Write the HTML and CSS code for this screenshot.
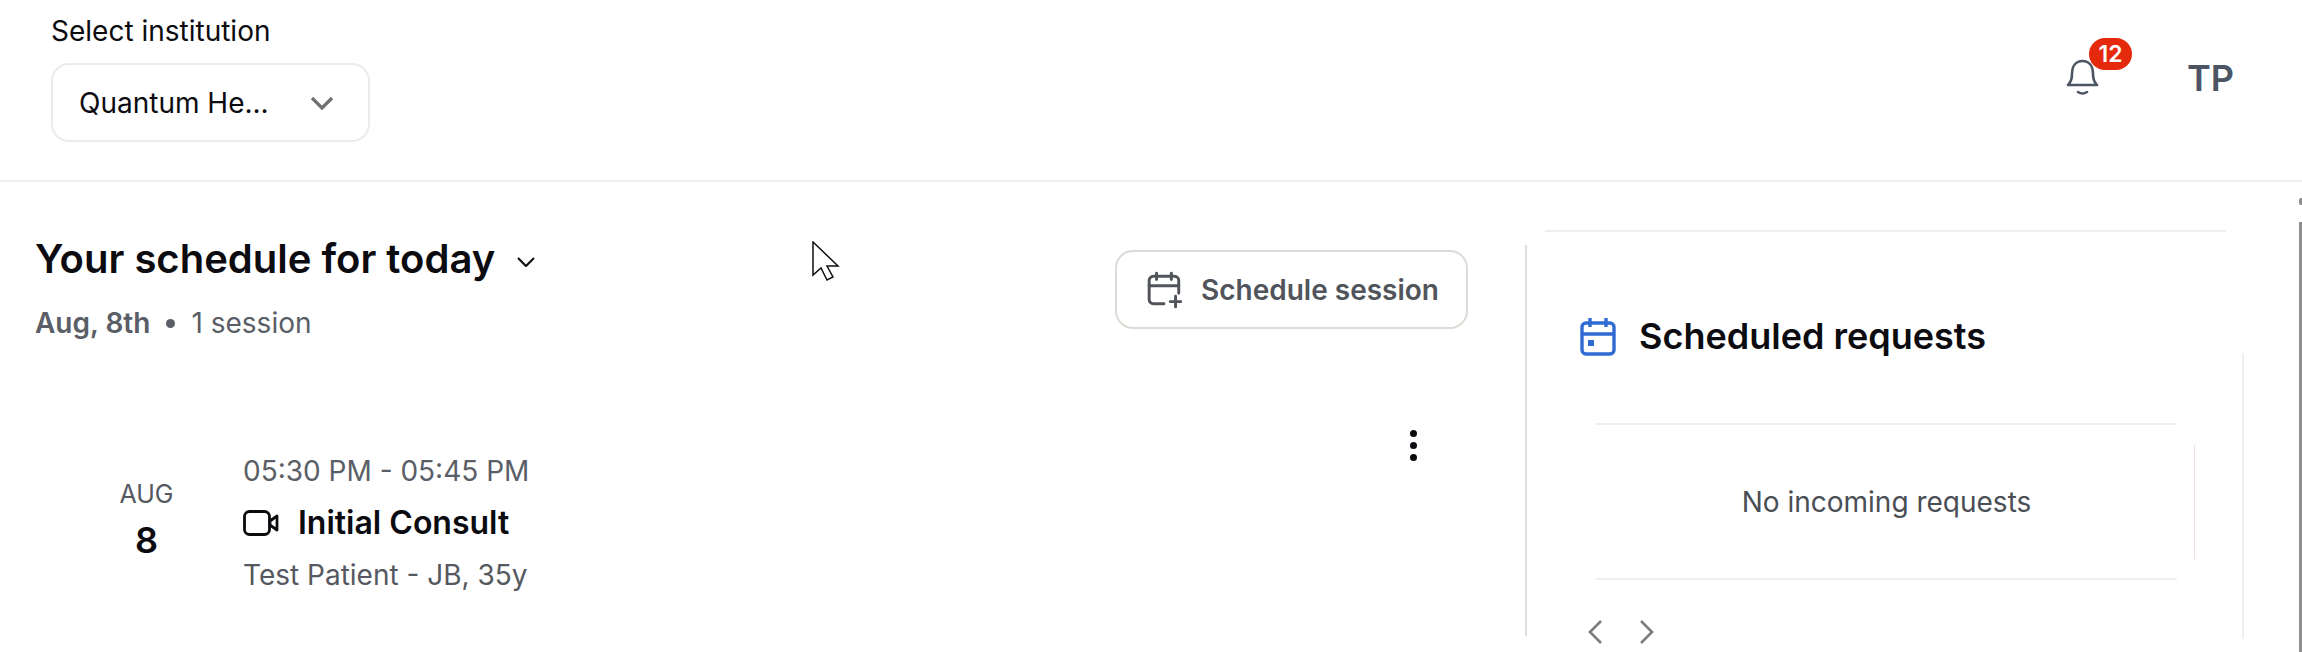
FILE: index.html
```html
<!DOCTYPE html>
<html lang="en">

<head>
  <meta charset="UTF-8">
  <title>Schedule</title>
  <link rel="stylesheet" href="styles.css">
</head>

<body>

  <header class="top-bar">
    <div class="institution">
      <label class="institution-label">Select institution</label>
      <div class="institution-select">
        <span>Quantum He...</span>
        <svg class="select-chevron" viewBox="0 0 24 14" fill="none" stroke="#707070" stroke-width="3.2">
          <path d="M2 2l10 10L22 2" />
        </svg>
      </div>
    </div>
    <div class="top-actions">
      <div class="bell">
        <svg class="bell-icon" viewBox="0 0 34 38" fill="none" stroke="#4b5563" stroke-width="2.6" stroke-linecap="round" stroke-linejoin="round">
          <path d="M2 27c3-3 4-6 4-11C6 8 10 3 16.5 3S27 8 27 16c0 5 1 8 4 11z" />
          <path d="M12 34c3 2 6 2 9 0" />
        </svg>
        <span class="badge">12</span>
      </div>
      <span class="avatar">TP</span>
    </div>
  </header>

  <main class="content">
    <section class="schedule">
      <div class="schedule-head">
        <div>
          <h1 class="schedule-title">
            Your schedule for today
            <svg class="title-chevron" viewBox="0 0 18 10" fill="none" stroke="#111" stroke-width="2.2">
              <path d="M1 1l8 8 8-8" />
            </svg>
          </h1>
          <p class="schedule-sub"><strong>Aug, 8th</strong><span class="dot"></span>1 session</p>
        </div>
        <button class="schedule-btn">
          <svg class="btn-icon" viewBox="0 0 34 36" fill="none" stroke="#51555b" stroke-width="2.8" stroke-linecap="round" stroke-linejoin="round">
            <path d="M16 31H6a4 4 0 0 1-4-4V9a4 4 0 0 1 4-4h20a4 4 0 0 1 4 4v12" />
            <path d="M2 14h28M9 2v6M23 2v6M27 24v10M22 29h10" />
          </svg>
          Schedule session
        </button>
      </div>

      <div class="session">
        <div class="session-date">
          <span class="session-month">AUG</span>
          <span class="session-day">8</span>
        </div>
        <div class="session-info">
          <div class="session-time">05:30 PM - 05:45 PM</div>
          <div class="session-name">
            <svg class="video-icon" viewBox="0 0 36 26" fill="none" stroke="#0b0b0f" stroke-width="2.8" stroke-linejoin="round">
              <rect x="1.5" y="1.5" width="25" height="23" rx="5" />
              <path d="M27 11l7-5v14l-7-5z" />
            </svg>
            Initial Consult
          </div>
          <div class="session-patient">Test Patient - JB, 35y</div>
        </div>
        <div class="session-menu">
          <span></span><span></span><span></span>
        </div>
      </div>
    </section>

    <aside class="requests">
      <h2 class="requests-title">
        <svg class="requests-icon" viewBox="0 0 36 39" fill="none" stroke="#2f6bd3" stroke-width="3.4" stroke-linejoin="round">
          <rect x="2" y="6" width="32" height="31" rx="4" />
          <path d="M2 17h32M10 1v9M26 1v9" />
          <rect x="8" y="23" width="6" height="6" fill="#2f6bd3" stroke="none" />
        </svg>
        Scheduled requests
      </h2>
      <div class="requests-empty">No incoming requests</div>
      <div class="requests-nav">
        <svg viewBox="0 0 14 24" fill="none" stroke="#7c7c7c" stroke-width="2.6"><path d="M13 1L2 12l11 11" /></svg>
        <svg viewBox="0 0 14 24" fill="none" stroke="#7c7c7c" stroke-width="2.6"><path d="M1 1l11 11L1 23" /></svg>
      </div>
    </aside>
  </main>

  <div class="scroll-dot"></div>
  <div class="scroll-thumb"></div>

  <svg class="cursor" viewBox="0 0 28 40" fill="#fff" stroke="#111" stroke-width="1.5" stroke-linejoin="miter">
    <path d="M1 1v33l8-7 6 12 6-3-6-11h11z" />
  </svg>

</body>

</html>
```

FILE: styles.css
```css
html,
body {
  height: 652px;
  overflow: hidden;
}

body {
  margin: 0;
  background: #fff;
  color: #0b0b10;
  font-family: "Inter", "Liberation Sans", sans-serif;
  position: relative;
}

.top-bar {
  height: 182px;
  box-sizing: border-box;
  border-bottom: 2px solid #eeeeee;
  display: flex;
  justify-content: space-between;
  padding: 16px 68px 0 51px;
}

.institution-label {
  display: block;
  font-size: 28px;
  line-height: 30px;
}

.institution-select {
  width: 319px;
  height: 79px;
  margin-top: 17px;
  box-sizing: border-box;
  border: 2px solid #ebebe9;
  border-radius: 18px;
  padding: 0 34px 0 26px;
  display: flex;
  align-items: center;
  justify-content: space-between;
  font-size: 28px;
}

.select-chevron {
  width: 24px;
  height: 14px;
}

.top-actions {
  display: flex;
  align-items: flex-start;
  gap: 87px;
  padding-top: 42px;
}

.bell {
  position: relative;
  width: 34px;
  height: 38px;
}

.bell-icon {
  width: 34px;
  height: 38px;
}

.badge {
  position: absolute;
  top: -20px;
  left: 23px;
  width: 43px;
  height: 32px;
  border-radius: 16px;
  background: #e5290c;
  color: #fff;
  font-size: 23px;
  font-weight: 600;
  line-height: 32px;
  text-align: center;
}

.avatar {
  font-size: 36px;
  font-weight: 600;
  line-height: 36px;
  color: #4b5563;
  margin-top: 2px;
}

.content {
  display: flex;
}

.schedule {
  width: 1525px;
  box-sizing: border-box;
  padding: 0 57px 0 35px;
}

.schedule-head {
  display: flex;
  justify-content: space-between;
  align-items: flex-start;
  padding-top: 53px;
}

.schedule-title {
  margin: 0;
  font-size: 40px;
  font-weight: 600;
  line-height: 48px;
  display: flex;
  align-items: center;
  gap: 22px;
}

.title-chevron {
  width: 18px;
  height: 10px;
  margin-top: 6px;
}

.schedule-sub {
  margin: 23px 0 0;
  font-size: 28px;
  line-height: 34px;
  color: #5a5e66;
  display: flex;
  align-items: center;
}

.schedule-sub strong {
  font-weight: 600;
}

.dot {
  width: 9px;
  height: 9px;
  border-radius: 50%;
  background: #5a5e66;
  margin: 0 16px;
}

.schedule-btn {
  margin-top: 15px;
  width: 353px;
  height: 79px;
  box-sizing: border-box;
  background: #fff;
  border: 2px solid #dedbd6;
  border-radius: 18px;
  padding: 0 0 0 30px;
  display: flex;
  align-items: center;
  gap: 18px;
  font-family: inherit;
  font-size: 28px;
  font-weight: 600;
  color: #51555b;
}

.btn-icon {
  width: 36px;
  height: 38px;
}

.session {
  display: flex;
  align-items: flex-start;
  margin-top: 114px;
  position: relative;
}

.session-date {
  width: 208px;
  box-sizing: border-box;
  padding-top: 27px;
  padding-left: 15px;
  display: flex;
  flex-direction: column;
  align-items: center;
}

.session-month {
  font-size: 25px;
  line-height: 26px;
  color: #55595f;
}

.session-day {
  font-size: 36px;
  font-weight: 600;
  line-height: 44px;
  margin-top: 11px;
}

.session-info {
  flex: 1;
}

.session-time {
  font-size: 28px;
  line-height: 34px;
  color: #5a5e66;
}

.session-name {
  display: flex;
  align-items: center;
  gap: 19px;
  font-size: 32px;
  font-weight: 600;
  line-height: 40px;
  margin-top: 15px;
}

.video-icon {
  width: 36px;
  height: 26px;
}

.session-patient {
  font-size: 28px;
  line-height: 34px;
  color: #55595f;
  margin-top: 15px;
}

.session-menu {
  position: absolute;
  top: -24px;
  right: 51px;
  display: flex;
  flex-direction: column;
  gap: 5px;
}

.session-menu span {
  width: 7px;
  height: 7px;
  border-radius: 50%;
  background: #0b0b10;
}

.requests {
  width: 719px;
  height: 391px;
  margin-top: 63px;
  border-left: 2px solid #dedfd9;
  box-sizing: border-box;
  padding: 0 0 0 53px;
  position: relative;
}

/* top edge and right edge stop short of the corners */
.requests::before {
  content: "";
  position: absolute;
  top: -15px;
  left: 18px;
  width: 681px;
  height: 2px;
  background: #eeeeee;
}

.requests::after {
  content: "";
  position: absolute;
  top: 108px;
  right: 0;
  width: 2px;
  height: 286px;
  background: #eeeeee;
}

.requests-title {
  margin: 0;
  padding-top: 69px;
  display: flex;
  align-items: center;
  gap: 23px;
  font-size: 36px;
  font-weight: 600;
  line-height: 44px;
}

.requests-icon {
  width: 36px;
  height: 39px;
}

.requests-empty {
  width: 581px;
  height: 157px;
  margin-top: 65px;
  margin-left: 16px;
  box-sizing: border-box;
  border-top: 2px solid #eeeeee;
  border-bottom: 2px solid #eeeeee;
  display: flex;
  align-items: center;
  justify-content: center;
  font-size: 28px;
  color: #4a4e55;
  position: relative;
}

.requests-empty::after {
  content: "";
  position: absolute;
  top: 20px;
  right: -18px;
  width: 1px;
  height: 114px;
  background: #f3dcec;
}

.requests-nav {
  display: flex;
  gap: 38px;
  margin-top: 40px;
  margin-left: 8px;
}

.requests-nav svg {
  width: 14px;
  height: 24px;
}

.scroll-dot {
  position: absolute;
  top: 198px;
  right: 0;
  width: 3px;
  height: 7px;
  border-radius: 2px 0 0 2px;
  background: #8f8f8f;
}

.scroll-thumb {
  position: absolute;
  top: 222px;
  right: 0;
  width: 3px;
  height: 430px;
  background: #8f8f8f;
}

.cursor {
  position: absolute;
  top: 241px;
  left: 812px;
  width: 28px;
  height: 40px;
}
```
